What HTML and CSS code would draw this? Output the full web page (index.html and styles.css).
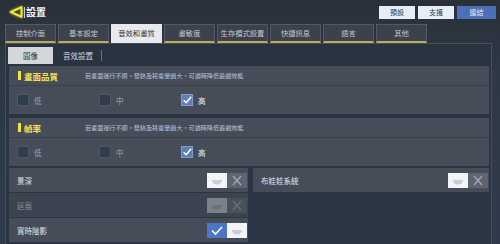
FILE: index.html
```html
<!DOCTYPE html>
<html lang="zh-Hant">
<head>
<meta charset="utf-8">
<link rel="stylesheet" href="styles.css">
</head>
<body>
<div class="screen">
  <header class="topbar">
    <div class="title">
      <svg class="back" width="14" height="12" viewBox="0 0 14 12"><path d="M12.5 1.2 L1.8 6 L12.5 10.8 Z" fill="#4a4a30" stroke="#f2e23a" stroke-width="2.2" stroke-linejoin="round"/></svg>
      <span class="sep"></span>
      <span class="title-text">設置</span>
    </div>
    <div class="actions">
      <span class="btn">預設</span>
      <span class="btn">支援</span>
      <span class="btn btn-blue">連結</span>
    </div>
  </header>
  <nav class="tabs">
    <span class="tab">控制介面</span>
    <span class="tab">基本設定</span>
    <span class="tab active">音效和畫質</span>
    <span class="tab">畫敏度</span>
    <span class="tab">生存模式設置</span>
    <span class="tab">快捷訊息</span>
    <span class="tab">語言</span>
    <span class="tab">其他</span>
  </nav>
  <main class="panel">
    <div class="subtabs">
      <span class="subtab active">圖像</span>
      <span class="subtab">音效設置</span>
      <span class="subsep"></span>
    </div>
    <section class="section">
      <div class="sec-head">
        <span class="bar"></span>
        <span class="sec-title">畫面品質</span>
        <span class="sec-desc">若畫面運行不順，發熱及耗電量過大，可適時降低遊戲效能</span>
      </div>
      <div class="options">
        <label class="opt"><span class="box"></span><span class="lbl">低</span></label>
        <label class="opt"><span class="box"></span><span class="lbl">中</span></label>
        <label class="opt on"><span class="box"><svg width="12" height="12" viewBox="0 0 12 12"><path d="M2 6.2 L5 9.2 L11 2" fill="none" stroke="#fff" stroke-width="1.8"/></svg></span><span class="lbl">高</span></label>
      </div>
    </section>
    <section class="section sec2">
      <div class="sec-head">
        <span class="bar"></span>
        <span class="sec-title">幀率</span>
        <span class="sec-desc">若畫面運行不順，發熱及耗電量過大，可適時降低遊戲效能</span>
      </div>
      <div class="options">
        <label class="opt"><span class="box"></span><span class="lbl">低</span></label>
        <label class="opt"><span class="box"></span><span class="lbl">中</span></label>
        <label class="opt on"><span class="box"><svg width="12" height="12" viewBox="0 0 12 12"><path d="M2 6.2 L5 9.2 L11 2" fill="none" stroke="#fff" stroke-width="1.8"/></svg></span><span class="lbl">高</span></label>
      </div>
    </section>
    <div class="rows">
      <div class="row">
        <span class="row-lbl">景深</span>
        <span class="toggle">
          <span class="half knob"><svg width="20" height="15" viewBox="0 0 20 15"><path d="M5 7 A5 4.5 0 0 0 15 7 Z" fill="#c9cdd8"/></svg></span>
          <span class="half x"><svg width="20" height="15" viewBox="0 0 20 15"><path d="M6 3 L14 12 M14 3 L6 12" stroke="#a4aab4" stroke-width="1.3"/></svg></span>
        </span>
      </div>
      <div class="row">
        <span class="row-lbl">布娃娃系統</span>
        <span class="toggle">
          <span class="half knob"><svg width="20" height="15" viewBox="0 0 20 15"><path d="M5 7 A5 4.5 0 0 0 15 7 Z" fill="#c9cdd8"/></svg></span>
          <span class="half x"><svg width="20" height="15" viewBox="0 0 20 15"><path d="M6 3 L14 12 M14 3 L6 12" stroke="#a4aab4" stroke-width="1.3"/></svg></span>
        </span>
      </div>
      <div class="row disabled">
        <span class="row-lbl">延展</span>
        <span class="toggle">
          <span class="half knob"><svg width="20" height="15" viewBox="0 0 20 15"><path d="M5 7 A5 4.5 0 0 0 15 7 Z" fill="#6c727c"/></svg></span>
          <span class="half x"><svg width="20" height="15" viewBox="0 0 20 15"><path d="M6 3 L14 12 M14 3 L6 12" stroke="#6a707a" stroke-width="1.3"/></svg></span>
        </span>
      </div>
      <div class="row-empty"></div>
      <div class="row">
        <span class="row-lbl">實時陰影</span>
        <span class="toggle">
          <span class="half check"><svg width="20" height="15" viewBox="0 0 20 15"><path d="M5 7.5 L8.5 11 L15 4" fill="none" stroke="#fff" stroke-width="1.6"/></svg></span>
          <span class="half knob"><svg width="20" height="15" viewBox="0 0 20 15"><path d="M5 7 A5 4.5 0 0 0 15 7 Z" fill="#c9cdd8"/></svg></span>
        </span>
      </div>
    </div>
  </main>
</div>
</body>
</html>
```
FILE: styles.css
```css
* { box-sizing: border-box; }
html, body { margin: 0; padding: 0; }
body {
  width: 500px;
  height: 244px;
  overflow: hidden;
  font-family: "Noto Sans CJK TC", "Noto Sans", sans-serif;
  background: #2d3846;
}
.screen {
  width: 500px;
  height: 244px;
  background: linear-gradient(180deg, #2a3038 0%, #2e3846 30%, #2f3b4b 100%);
}
.topbar {
  height: 24px;
  display: flex;
  align-items: center;
  justify-content: space-between;
  padding: 0 4px 0 9px;
}
.title { display: flex; align-items: center; }
.back { filter: drop-shadow(0 0 1.5px rgba(242, 226, 58, 0.7)); }
.sep {
  width: 1px;
  height: 11px;
  background: #c8ccd0;
  margin: 0 1px 0 1px;
}
.title-text {
  color: #f4f6f8;
  font-size: 10px;
  font-weight: 700;
  line-height: 12px;
}
.actions { display: flex; gap: 3px; }
.btn {
  height: 13px;
  width: 36px;
  background: #e6edf6;
  color: #2a3a55;
  font-size: 7px;
  display: flex;
  align-items: center;
  justify-content: center;
}
.btn-blue { background: #4b6fb8; color: #e6ecf6; width: 39px; }
.tabs {
  display: flex;
  gap: 2px;
  padding-left: 5px;
  height: 19px;
}
.tab {
  width: 51px;
  height: 19px;
  background: #3b424c;
  border: 1px solid #525a64;
  border-bottom: 2px solid #b9ad5a;
  color: #c2c7cf;
  font-size: 7.3px;
  display: flex;
  align-items: center;
  justify-content: center;
}
.tab.active {
  background: #e8eaec;
  border-color: #e8eaec;
  color: #2c3036;
}
.panel {
  margin-left: 5px;
  width: 487px;
  height: 201px;
  border: 1px solid #46505d;
  border-bottom: none;
  background: rgba(40, 50, 62, 0.55);
  padding: 0 2px 0 3px;
}
.subtabs {
  display: flex;
  align-items: center;
  height: 21px;
  padding-top: 1px;
  margin-left: -1px;
}
.subtab {
  font-size: 7.5px;
  color: #d2d6dc;
  height: 17px;
  display: flex;
  align-items: center;
  justify-content: center;
}
.subtab.active {
  width: 45px;
  background: #d4d7da;
  color: #30343a;
  margin-right: 10px;
}
.subsep {
  width: 1px;
  height: 11px;
  background: #6a727e;
  margin-left: 8px;
}
.section {
  margin-top: 1px;
  height: 48px;
  background: #474d58;
  display: flex;
  flex-direction: column;
}
.sec2 { margin-top: 4px; }
.sec-head {
  height: 20px;
  display: flex;
  align-items: center;
  padding-left: 9px;
  border-bottom: 1px solid #3b414b;
}
.bar {
  width: 3px;
  height: 9px;
  background: #f2e43c;
  margin-right: 3px;
}
.sec-title {
  width: 61px;
  color: #ede35a;
  font-size: 8.5px;
  font-weight: 700;
}
.sec-desc {
  color: #b6c4de;
  font-size: 6.1px;
  white-space: nowrap;
}
.options {
  flex: 1;
  display: flex;
  align-items: center;
  padding-left: 8px;
}
.opt {
  width: 82px;
  display: flex;
  align-items: center;
}
.box {
  width: 12px;
  height: 12px;
  background: #313d4b;
  border: 1px solid #4c5868;
  display: flex;
  align-items: center;
  justify-content: center;
}
.opt.on .box {
  background: #5f7fb8;
  border-color: #7f9bcc;
}
.box svg { display: block; }
.lbl {
  margin-left: 5px;
  font-size: 7.5px;
  color: #9ca2ac;
}
.opt.on .lbl { color: #eef0f2; }
.rows {
  margin-top: 2px;
  display: grid;
  grid-template-columns: 239px 1fr;
  grid-auto-rows: 24px;
  gap: 1px 5px;
}
.row {
  background: #464c58;
  display: flex;
  align-items: center;
  justify-content: space-between;
  padding: 0 1px 0 8px;
}
.row.disabled { background: #3c4450; }
.row-lbl {
  font-size: 7.5px;
  color: #e2e6ea;
}
.row.disabled .row-lbl { color: #858d99; }
.toggle { display: flex; height: 15px; }
.half {
  width: 20px;
  height: 15px;
  display: block;
}
.half svg { display: block; }
.half.knob { background: #f2f4f6; }
.half.x { background: #5f656f; }
.half.check { background: #4c76c4; }
.row.disabled .half.knob { background: #7b818b; }
.row.disabled .half.x { background: #4a505a; }
```
